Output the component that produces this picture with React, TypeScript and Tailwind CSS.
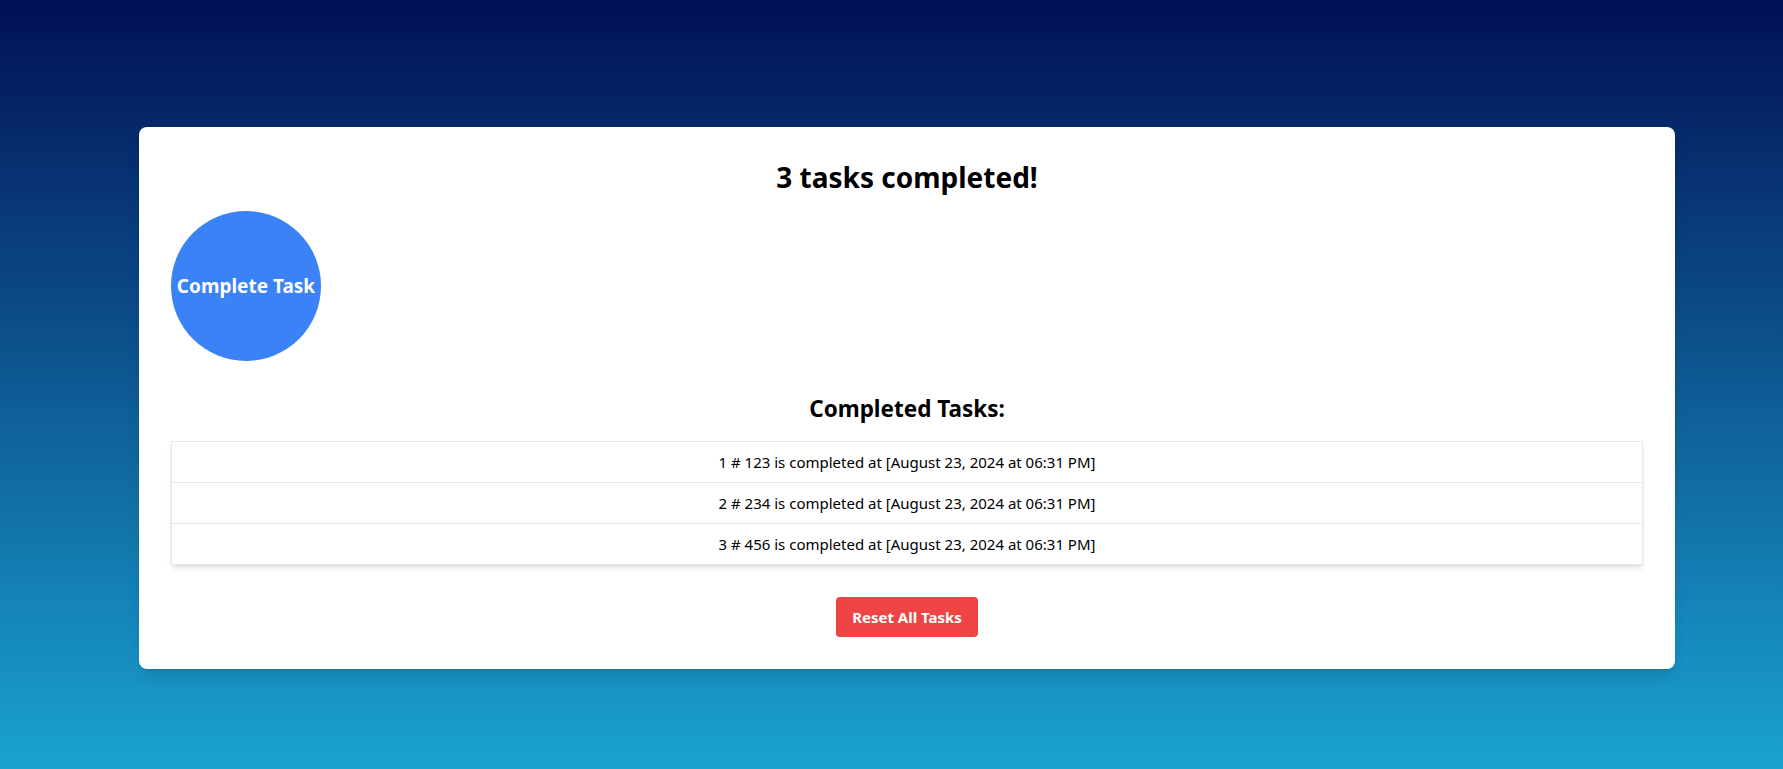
import { useState } from "react";

const initialTasks = [
  { id: 123, at: "August 23, 2024 at 06:31 PM" },
  { id: 234, at: "August 23, 2024 at 06:31 PM" },
  { id: 456, at: "August 23, 2024 at 06:31 PM" },
];

export default function App() {
  const [tasks, setTasks] = useState(initialTasks);

  return (
    <div className="min-h-screen w-full bg-linear-to-b/srgb from-[#021056] to-[#1aa3d1] pt-[127px] pb-[100px] pl-[139px] font-['Noto_Sans',sans-serif] text-black">
      <div className="w-[1536px] rounded-lg bg-white p-8 shadow-lg">
        <h1 className="mb-4 text-center text-[28px] font-bold leading-9">
          {tasks.length} tasks completed!
        </h1>

        {/* Big round button */}
        <button className="flex h-[150px] w-[150px] items-center justify-center rounded-full bg-[#3b82f6] text-[19px] font-bold text-white">
          Complete Task
        </button>

        <h2 className="mt-8 mb-4 text-center text-[22.5px] font-bold leading-8">
          Completed Tasks:
        </h2>

        <ul className="shadow-md">
          {tasks.map((t, i) => (
            <li
              key={t.id}
              className="border border-[#e5e7eb] py-2 text-center text-[15px] leading-6 [&+&]:border-t-0"
            >
              {i + 1} # {t.id} is completed at [{t.at}]
            </li>
          ))}
        </ul>

        <div className="mt-8 flex justify-center">
          <button
            onClick={() => setTasks([])}
            className="h-10 rounded bg-[#ef4444] px-4 text-[15px] font-bold text-white"
          >
            Reset All Tasks
          </button>
        </div>
      </div>
    </div>
  );
}
